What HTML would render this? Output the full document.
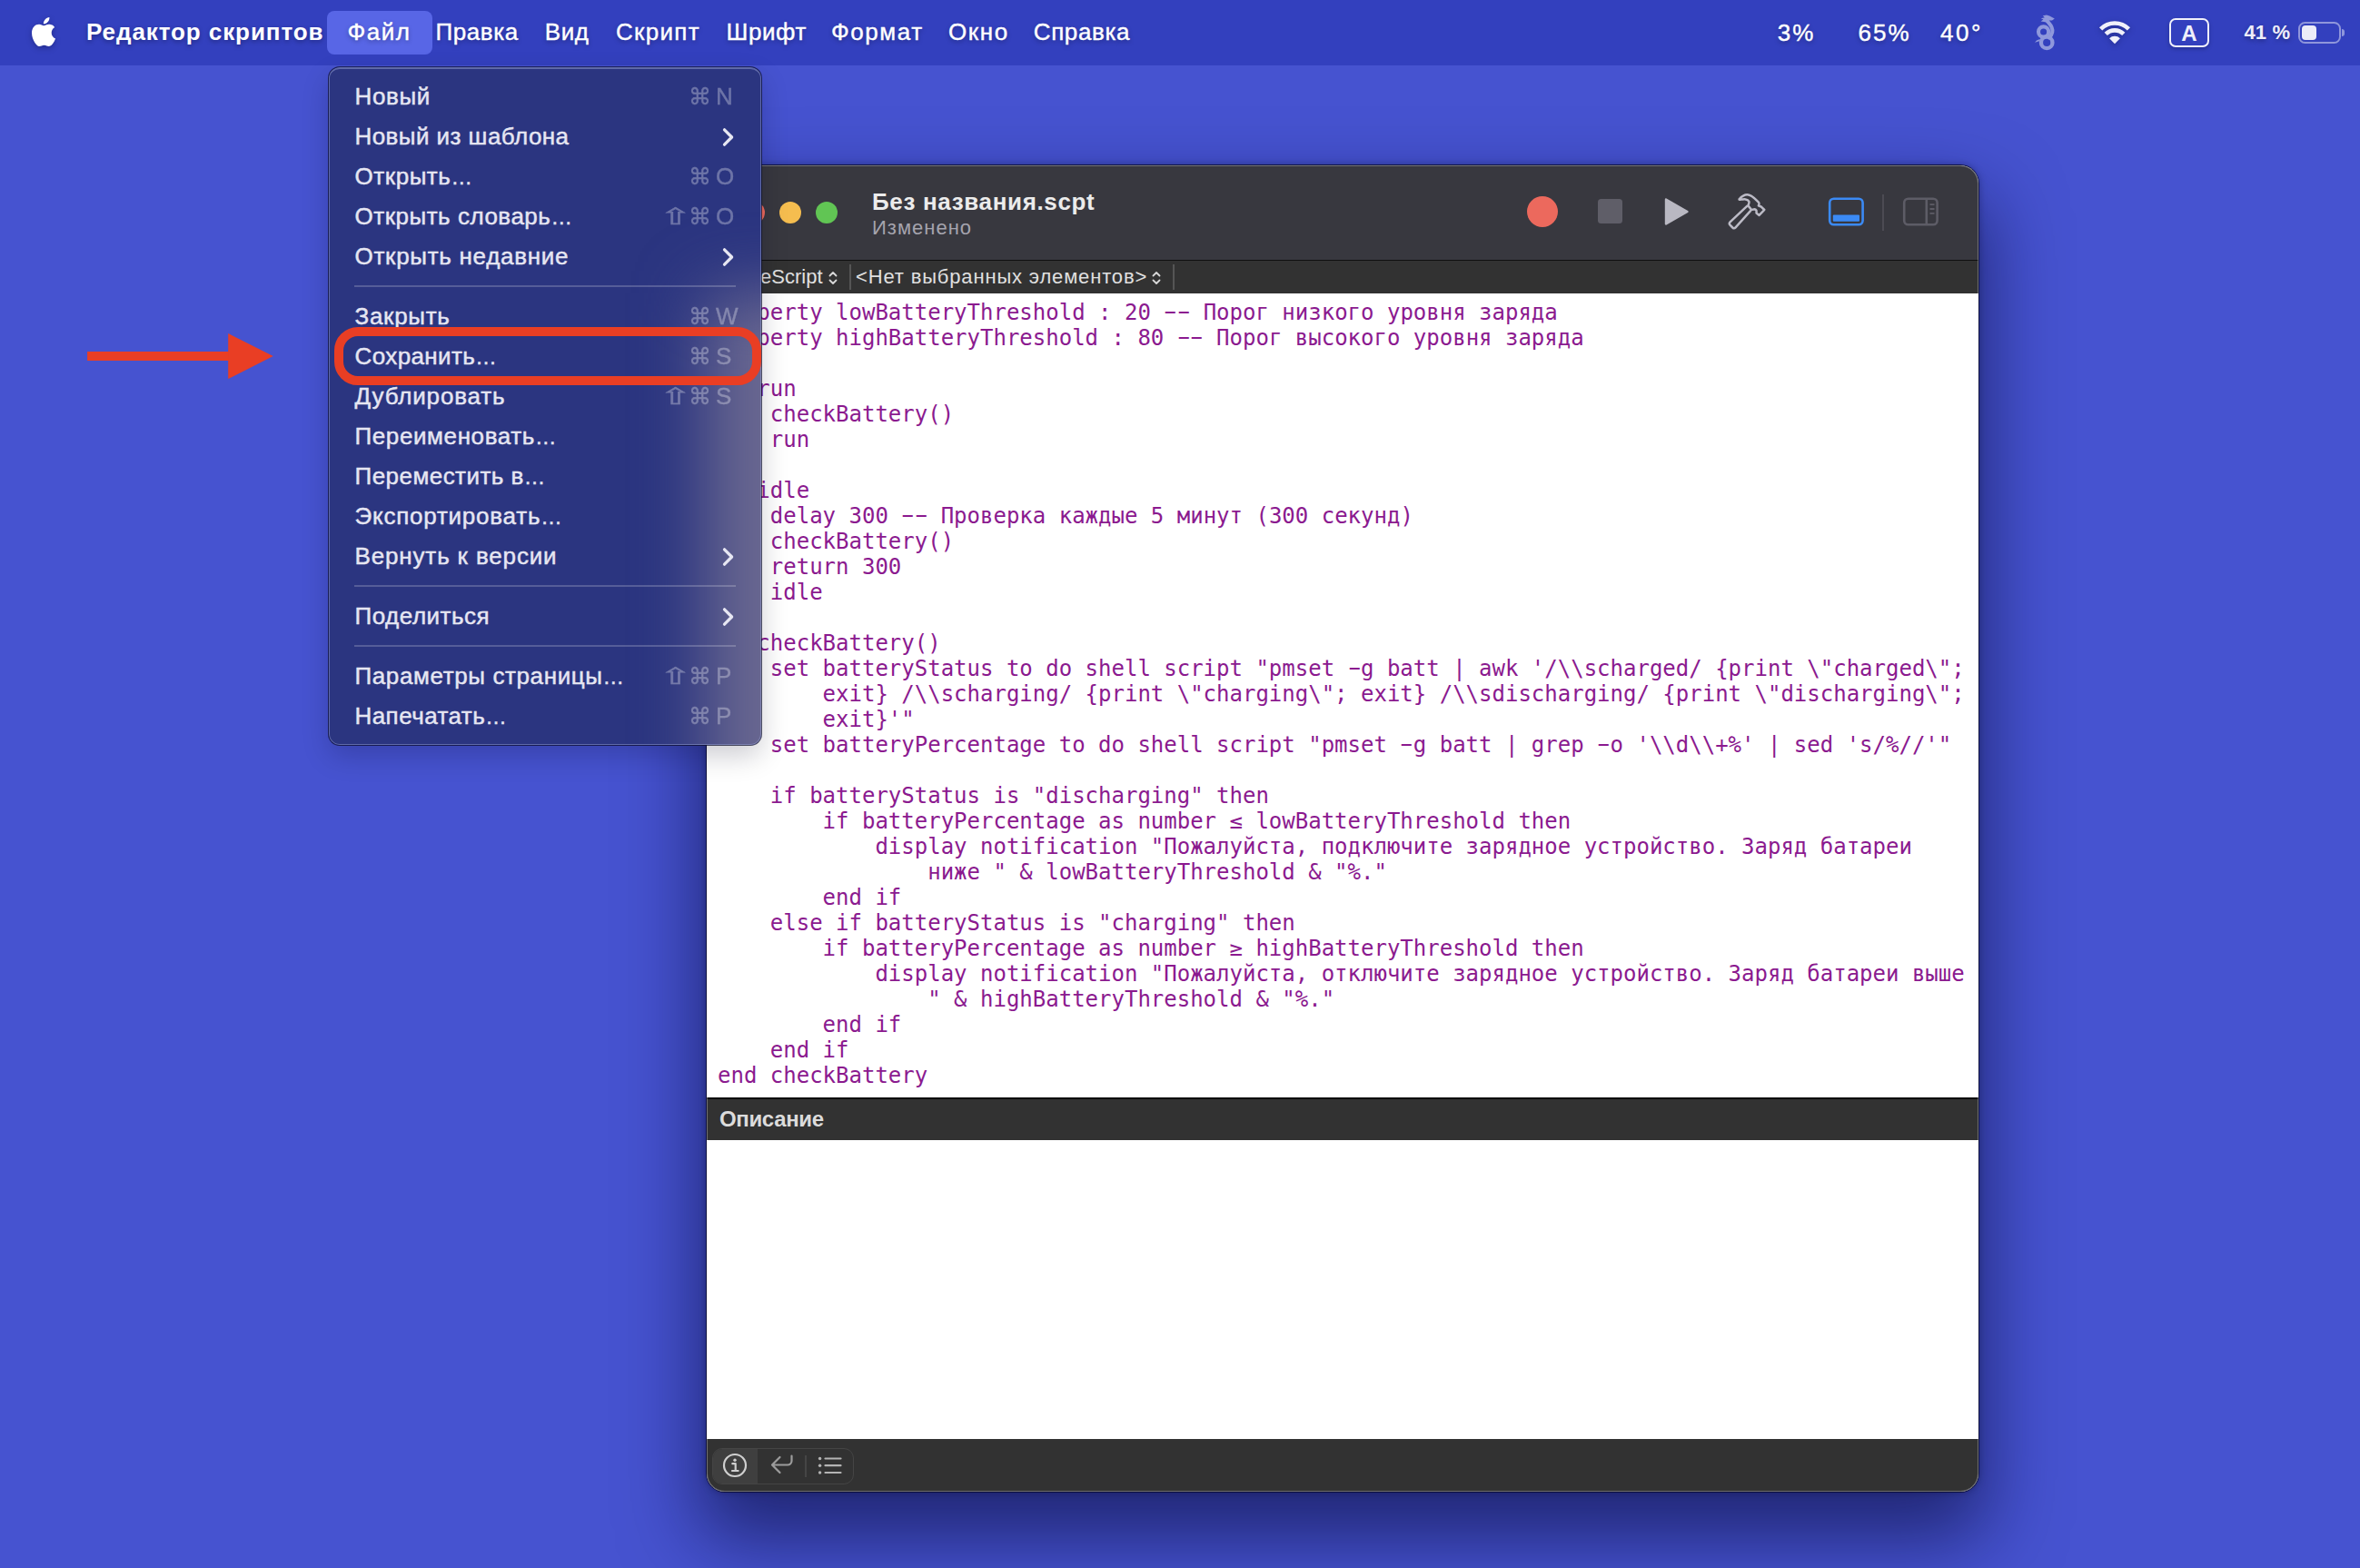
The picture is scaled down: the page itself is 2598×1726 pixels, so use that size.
<!DOCTYPE html>
<html lang="ru">
<head>
<meta charset="utf-8">
<title>Редактор скриптов</title>
<style>
*{box-sizing:border-box;margin:0;padding:0}
html,body{width:2598px;height:1726px;overflow:hidden}
body{position:relative;background:#4653d0;font-family:"Liberation Sans","DejaVu Sans",sans-serif;color:#fff;-webkit-font-smoothing:antialiased}
.abs{position:absolute}
/* ---------- menu bar ---------- */
#menubar{position:absolute;left:0;top:0;width:2598px;height:72px;background:#3340be}
#menubar .mi{-webkit-text-stroke:.4px #fff;position:absolute;top:0;height:72px;line-height:72px;font-size:26px;white-space:nowrap;color:#fff;text-shadow:0 2px 5px rgba(0,0,30,.35)}
#menubar .mi span{position:relative;top:-1px}
#menubar .b{font-weight:bold;-webkit-text-stroke:0}
#filehl{position:absolute;left:360px;top:12px;width:116px;height:48px;border-radius:8px;background:#5866e6}
.st{-webkit-text-stroke:.4px #fff;position:absolute;top:0;height:72px;line-height:72px;font-size:26px;white-space:nowrap;color:#fff;text-shadow:0 2px 5px rgba(0,0,30,.35)}
/* ---------- window ---------- */
#winshadow{position:absolute;left:778px;top:182px;width:1400px;height:1460px;border-radius:20px;box-shadow:0 44px 84px 8px rgba(8,10,56,.6),0 0 0 1px rgba(0,0,10,.65),0 0 8px rgba(0,0,40,.4)}
#window{position:absolute;left:778px;top:182px;width:1400px;height:1460px;border-radius:20px;overflow:hidden;background:#fff}
#titlebar{position:absolute;left:0;top:0;width:1400px;height:104px;background:#38383f}
#tbline{position:absolute;left:0;top:104px;width:1400px;height:2px;background:#101010}
#navbar{position:absolute;left:0;top:105px;width:1400px;height:36px;background:#323232}
#code{position:absolute;left:0;top:141px;width:1400px;height:885px;background:#fff;color:#8b1a8f;font-family:"DejaVu Sans Mono","Liberation Mono",monospace;font-size:24px;line-height:28px;padding:7px 0 0 12px;white-space:pre}
#deschead{position:absolute;left:0;top:1026px;width:1400px;height:47px;background:#323232;border-top:2px solid #0c0c0c}
#descbody{position:absolute;left:0;top:1073px;width:1400px;height:329px;background:#fff}
#botbar{position:absolute;left:0;top:1402px;width:1400px;height:58px;background:#323232}
/* ---------- dropdown menu ---------- */
#menu{position:absolute;left:362px;top:74px;width:476px;height:746px;border-radius:12px;background:#2b3580;box-shadow:0 0 0 1px rgba(10,12,40,.7),0 12px 30px rgba(0,0,30,.2);overflow:hidden}
#menu:after{content:"";position:absolute;left:0;top:0;right:0;bottom:0;border-radius:12px;border:1.5px solid rgba(160,170,220,.45);border-top-width:2px}
#menu .it{-webkit-text-stroke:.45px #e6e6f2;position:absolute;left:28.500px;height:44px;line-height:44px;font-size:26px;color:#e6e6f2;white-space:nowrap}
#menu .sc{-webkit-text-stroke:.3px #fff;opacity:.31;position:absolute;right:31px;height:44px;line-height:44px;font-size:26px;color:#fff;white-space:nowrap;text-align:right}
#menu .sep{position:absolute;left:28px;width:420px;height:2px;background:rgba(255,255,255,.2)}
#menu .chev{position:absolute;left:433px}
#menu .sc i{font-style:normal;font-family:"DejaVu Sans",sans-serif;display:inline-block}
#menu .sc i.cm{font-size:25px;width:30px;text-align:left}
#menu .sc i.sf{font-size:25px;width:29px;text-align:center;transform:scaleX(1.750)}
#menu .sc b{font-weight:normal;display:inline-block;width:19px;text-align:left}
.dot{position:absolute;top:40px;width:24px;height:24px;border-radius:50%}
#wtitle{left:182px;top:21.500px;font-size:26px;font-weight:bold;line-height:36px;color:#ececec;white-space:nowrap;letter-spacing:.65px}
#wsub{left:182px;top:53px;font-size:22px;line-height:32px;color:#a5a4ae;white-space:nowrap;letter-spacing:1px}
.nv{top:0;height:36px;line-height:36px;font-size:22px;color:#e0e0e0;white-space:nowrap}
#menu .el{font-size:23.500px;letter-spacing:0}
.hy{display:inline-block;transform:translateY(-.8px) scaleX(1.800)}
</style>
</head>
<body>

<!-- ================= MENU BAR ================= -->
<div id="menubar">
  <svg class="abs" style="left:35px;top:19px;filter:drop-shadow(0 2px 3px rgba(0,0,30,.3))" width="26" height="32" viewBox="0 0 814 1000" preserveAspectRatio="none"><path fill="#fff" d="M788.1 340.9c-5.8 4.5-108.2 62.2-108.2 190.5 0 148.4 130.3 200.9 134.2 202.2-.6 3.2-20.7 71.9-68.7 141.9-42.8 61.6-87.5 123.1-155.500 123.1s-85.500-39.500-164-39.500c-76.500 0-103.700 40.800-165.900 40.800s-105.600-57-155.500-127C46.700 790.700 0 663 0 541.800c0-194.400 126.400-297.500 250.800-297.500 66.100 0 121.200 43.400 162.700 43.400 39.500 0 101.100-46 176.300-46 28.500 0 130.900 2.600 198.300 99.200zm-234-181.500c31.100-36.900 53.100-88.100 53.100-139.300 0-7.100-.6-14.300-1.900-20.100-50.600 1.900-110.800 33.700-147.100 75.800-28.500 32.400-55.100 83.600-55.100 135.500 0 7.800 1.300 15.600 1.900 18.100 3.200.6 8.400 1.300 13.600 1.300 45.400 0 102.500-30.400 135.500-71.300z"/></svg>
  <div id="filehl"></div>
  <div class="mi b" style="left:95px;letter-spacing:0.92px"><span>Редактор скриптов</span></div>
  <div class="mi" style="left:382.5px;letter-spacing:1.5px"><span>Файл</span></div>
  <div class="mi" style="left:479.4px;letter-spacing:0.6px"><span>Правка</span></div>
  <div class="mi" style="left:599.7px;letter-spacing:0.6px"><span>Вид</span></div>
  <div class="mi" style="left:678px;letter-spacing:1.3px"><span>Скрипт</span></div>
  <div class="mi" style="left:799.5px;letter-spacing:0.6px"><span>Шрифт</span></div>
  <div class="mi" style="left:915px;letter-spacing:1.54px"><span>Формат</span></div>
  <div class="mi" style="left:1044px;letter-spacing:1.6px"><span>Окно</span></div>
  <div class="mi" style="left:1137.8px;letter-spacing:0.6px"><span>Справка</span></div>

  <div class="st" style="left:1956.700px;letter-spacing:2px">3%</div>
  <div class="st" style="left:2045.600px;letter-spacing:2px">65%</div>
  <div class="st" style="left:2136px;letter-spacing:2.500px">40°</div>
  <div class="st" style="left:2470.500px;font-size:22px;font-weight:bold;letter-spacing:.1px;-webkit-text-stroke:0;color:#eeeefa">41 %</div>

  <!-- dragon -->
  <svg class="abs" style="left:2225px;top:8px" width="55" height="56" viewBox="0 0 55 56"><g fill="none" stroke="#8f98dc"><circle cx="28.200" cy="38.900" r="6.250" stroke-width="4.300"/><circle cx="24.600" cy="27" r="5.600" stroke-width="4.100"/><path d="M30.800 33.500C33.800 30.500 35.300 26 33.600 22C32.400 19 30 17 28.200 14.500" stroke-width="4" stroke-linecap="round"/></g><path fill="#8f98dc" d="M21.800 12.200L25.800 11.200L23.800 9.200L28 8.400L31.200 9.600L36.800 12.500L34 14.600L30.800 14.600L30 17L25 16L21.600 15.600L24.400 13.600ZM15 38.800L17 36.400L20.600 35L20.200 37.200Z"/></svg>
  <!-- wifi -->
  <svg class="abs" style="left:2308px;top:20px;filter:drop-shadow(0 2px 3px rgba(0,0,30,.3))" width="40" height="32" viewBox="0 0 40 32"><g fill="none" stroke="#f0f0fa" stroke-width="4.600"><path d="M4.600 11.800a21.800 21.800 0 0 1 30.800 0"/><path d="M10.200 17.400a13.900 13.900 0 0 1 19.600 0"/></g><path fill="#f0f0fa" d="M20 28.200l-5.900-5.900a8.300 8.300 0 0 1 11.800 0z"/></svg>
  <!-- input source -->
  <div class="abs" style="left:2388px;top:20px;width:44px;height:32px;border:2.500px solid #f0f0fa;border-radius:7px;box-shadow:0 2px 4px rgba(0,0,30,.25)"></div>
  <div class="abs" style="left:2388px;top:20px;width:44px;height:32px;line-height:33px;text-align:center;font-size:24px;font-weight:bold;color:#f0f0fa">A</div>
  <!-- battery -->
  <div class="abs" style="left:2530px;top:24px;width:46.500px;height:24px;border:2px solid rgba(255,255,255,.45);border-radius:7.500px"></div>
  <div class="abs" style="left:2534px;top:28px;width:16px;height:16px;border-radius:4px;background:#ececf8"></div>
  <div class="abs" style="left:2578px;top:32px;width:3px;height:8px;border-radius:0 3px 3px 0;background:rgba(255,255,255,.45)"></div>
</div>

<!-- ================= WINDOW ================= -->
<div id="winshadow"></div>
<div id="window">
  <div id="titlebar">
    <div class="dot" style="left:40px;background:#ec6a5e"></div>
    <div class="dot" style="left:80px;background:#f5bd4f"></div>
    <div class="dot" style="left:120px;background:#61c554"></div>
    <div class="abs" id="wtitle">Без названия.scpt</div>
    <div class="abs" id="wsub">Изменено</div>
    <!-- record -->
    <div class="abs" style="left:903px;top:34px;width:34px;height:34px;border-radius:50%;background:#ec695d"></div>
    <!-- stop -->
    <div class="abs" style="left:981px;top:37px;width:27px;height:27px;border-radius:3.500px;background:#5f5e68"></div>
    <!-- play -->
    <svg class="abs" style="left:1053px;top:34px" width="30" height="34" viewBox="0 0 30 34"><path d="M3 3.500L26.500 17 3 30.500z" fill="#b9b8c2" stroke="#b9b8c2" stroke-width="2.400" stroke-linejoin="round"/></svg>
    <!-- hammer -->
    <svg class="abs" style="left:1120px;top:28px" width="50" height="46" viewBox="0 0 50 46"><g fill="none" stroke="#bcbbc6" stroke-width="2.500" stroke-linejoin="round" stroke-linecap="round"><path d="M25.200 16.900L6.600 34.400Q4.900 36 6.500 37.700L9.300 40.500Q11 42.100 12.600 40.400L29 22.200"/><path d="M16.600 9.400C19 6.500 22 4.300 25.500 4.300C30.500 4.300 34 9 38.300 13.200C39 14 38.200 15.600 37.900 16.400C39 17 40.200 17 41.100 17.800L44.300 21L38.600 26.900L35.800 24.800C35 24 36 22.500 35.500 21.700C35 20.800 34.100 20.300 33.300 20.300C32.300 20.400 31 21 30.200 21L26.400 16.400C26.800 15 28 13 27.400 11.800C26.600 10.300 25 9.600 23.600 9.400C22 9.100 20.300 9.600 18.700 9.600C17.500 9.700 16.400 10 16.600 9.400Z"/></g></svg>
    <!-- bottom panel (active) -->
    <svg class="abs" style="left:1233px;top:33px" width="43" height="36" viewBox="0 0 43 36"><rect x="3.200" y="3.700" width="36.400" height="28.600" rx="4.500" fill="none" stroke="#3b8af5" stroke-width="2.600"/><rect x="6.800" y="21.500" width="29.200" height="7.200" rx="1" fill="#3b8af5"/></svg>
    <div class="abs" style="left:1294px;top:32px;width:2px;height:40px;background:#4c4b53"></div>
    <!-- right panel -->
    <svg class="abs" style="left:1315px;top:33px" width="43" height="36" viewBox="0 0 43 36"><g fill="none" stroke="#5d5c66"><rect x="3.200" y="3.700" width="36.400" height="28.600" rx="4.500" stroke-width="2.600"/><path d="M27.800 4v28" stroke-width="2.600"/><path d="M31.500 10.200h5M31.500 15h5M31.500 19.800h5" stroke-width="1.800"/></g></svg>
  </div>
  <div id="tbline"></div>
  <div id="navbar">
    <div class="abs nv" style="left:15px">AppleScript</div>
    <svg class="abs" style="left:133px;top:9px" width="12" height="20" viewBox="0 0 12 20"><path d="M2.500 7.500L6 4l3.500 3.500M2.500 12.500L6 16l3.500-3.500" fill="none" stroke="#d8d8d8" stroke-width="1.800" stroke-linecap="round" stroke-linejoin="round"/></svg>
    <div class="abs" style="left:157px;top:4px;width:2px;height:28px;background:#555"></div>
    <div class="abs nv" style="left:164px;letter-spacing:.84px">&lt;Нет выбранных элементов&gt;</div>
    <svg class="abs" style="left:489px;top:9px" width="12" height="20" viewBox="0 0 12 20"><path d="M2.500 7.500L6 4l3.500 3.500M2.500 12.500L6 16l3.500-3.500" fill="none" stroke="#d8d8d8" stroke-width="1.800" stroke-linecap="round" stroke-linejoin="round"/></svg>
    <div class="abs" style="left:513px;top:4px;width:2px;height:28px;background:#555"></div>
  </div>
  <div id="code">property lowBatteryThreshold : 20 <span class="hy">-</span><span class="hy">-</span> Порог низкого уровня заряда
property highBatteryThreshold : 80 <span class="hy">-</span><span class="hy">-</span> Порог высокого уровня заряда

on run
    checkBattery()
end run

on idle
    delay 300 <span class="hy">-</span><span class="hy">-</span> Проверка каждые 5 минут (300 секунд)
    checkBattery()
    return 300
end idle

on checkBattery()
    set batteryStatus to do shell script "pmset <span class="hy">-</span>g batt | awk '/\\scharged/ {print \"charged\";
        exit} /\\scharging/ {print \"charging\"; exit} /\\sdischarging/ {print \"discharging\";
        exit}'"
    set batteryPercentage to do shell script "pmset <span class="hy">-</span>g batt | grep <span class="hy">-</span>o '\\d\\+%' | sed 's/%//'"

    if batteryStatus is "discharging" then
        if batteryPercentage as number ≤ lowBatteryThreshold then
            display notification "Пожалуйста, подключите зарядное устройство. Заряд батареи
                ниже " &amp; lowBatteryThreshold &amp; "%."
        end if
    else if batteryStatus is "charging" then
        if batteryPercentage as number ≥ highBatteryThreshold then
            display notification "Пожалуйста, отключите зарядное устройство. Заряд батареи выше
                " &amp; highBatteryThreshold &amp; "%."
        end if
    end if
end checkBattery</div>
  <div id="deschead"><div class="abs" style="left:14px;top:-1px;height:46px;line-height:46px;font-size:24px;font-weight:bold;color:#dcdcdc;letter-spacing:-.35px">Описание</div></div>
  <div id="descbody"></div>
  <div id="botbar">
    <div class="abs" style="left:6px;top:10px;width:156px;height:40px;border:1.500px solid #454545;border-radius:11px;overflow:hidden"><div class="abs" style="left:-2px;top:-2px;width:51px;height:42px;background:#3f3f3f"></div><div class="abs" style="left:101px;top:7px;width:2px;height:24px;background:#454545"></div></div>
    <svg class="abs" style="left:16px;top:14px" width="30" height="30" viewBox="0 0 30 30"><circle cx="15" cy="15" r="12" fill="none" stroke="#cfcfcf" stroke-width="2.200"/><circle cx="15" cy="9.300" r="1.700" fill="#cfcfcf"/><path d="M12.300 13.200h3.400v7.600M12 21h6.600" fill="none" stroke="#cfcfcf" stroke-width="2.200" stroke-linecap="round" stroke-linejoin="round"/></svg>
    <svg class="abs" style="left:68px;top:15.300px" width="30" height="26" viewBox="0 0 30 26"><path d="M25.500 3.500v5.500a4.500 4.500 0 0 1-4.500 4.500H4.500M12.500 5L4 13.500 12.500 22" fill="none" stroke="#9c9c9c" stroke-width="2.200" stroke-linecap="round" stroke-linejoin="round"/></svg>
    <svg class="abs" style="left:121px;top:15.500px" width="30" height="26" viewBox="0 0 30 26"><g stroke="#b4b4b4" stroke-width="2.200" stroke-linecap="round"><path d="M9.500 5.500h17M9.500 13.200h17M9.500 21h17"/></g><g fill="#b4b4b4"><circle cx="3.600" cy="5.500" r="1.700"/><circle cx="3.600" cy="13.200" r="1.700"/><circle cx="3.600" cy="21" r="1.700"/></g></svg>
  </div>
  <div class="abs" style="left:0;top:0;width:1400px;height:1460px;border-radius:20px;border:1px solid rgba(255,255,255,.3);pointer-events:none"></div>
</div>

<!-- ================= DROPDOWN MENU ================= -->
<div id="menu">
  <div class="abs" style="left:416px;top:249px;width:260px;height:700px;background:#6a6890;filter:blur(38px)"></div>
  <div class="it" style="top:10px;letter-spacing:0.61px">Новый</div>
  <div class="sc" style="top:10px"><i class="cm">⌘</i><b>N</b></div>
  <div class="it" style="top:54px;letter-spacing:0.44px">Новый из шаблона</div>
  <svg class="chev" style="top:65.7px" width="14" height="22" viewBox="0 0 14 22"><path d="M2.500 2.800L10.600 11L2.500 19.200" fill="none" stroke="#e6e6f2" stroke-width="3.300" stroke-linecap="round" stroke-linejoin="round"/></svg>
  <div class="it" style="top:98px;letter-spacing:0.54px">Открыть<span class="el">…</span></div>
  <div class="sc" style="top:98px"><i class="cm">⌘</i><b>O</b></div>
  <div class="it" style="top:142px;letter-spacing:0.51px">Открыть словарь<span class="el">…</span></div>
  <div class="sc" style="top:142px"><i class="sf">⇧</i><i class="cm">⌘</i><b>O</b></div>
  <div class="it" style="top:186px;letter-spacing:0.71px">Открыть недавние</div>
  <svg class="chev" style="top:197.7px" width="14" height="22" viewBox="0 0 14 22"><path d="M2.500 2.800L10.600 11L2.500 19.200" fill="none" stroke="#e6e6f2" stroke-width="3.300" stroke-linecap="round" stroke-linejoin="round"/></svg>
  <div class="sep" style="top:240px"></div>
  <div class="it" style="top:252px;letter-spacing:0.7px">Закрыть</div>
  <div class="sc" style="top:252px"><i class="cm">⌘</i><b>W</b></div>
  <div class="it" style="top:296px;letter-spacing:0.4px">Сохранить<span class="el">…</span></div>
  <div class="sc" style="top:296px"><i class="cm">⌘</i><b>S</b></div>
  <div class="it" style="top:340px;letter-spacing:0.84px">Дублировать</div>
  <div class="sc" style="top:340px"><i class="sf">⇧</i><i class="cm">⌘</i><b>S</b></div>
  <div class="it" style="top:384px;letter-spacing:0.6px">Переименовать<span class="el">…</span></div>
  <div class="it" style="top:428px;letter-spacing:0.46px">Переместить в<span class="el">…</span></div>
  <div class="it" style="top:472px;letter-spacing:0.77px">Экспортировать<span class="el">…</span></div>
  <div class="it" style="top:516px;letter-spacing:0.85px">Вернуть к версии</div>
  <svg class="chev" style="top:527.7px" width="14" height="22" viewBox="0 0 14 22"><path d="M2.500 2.800L10.600 11L2.500 19.200" fill="none" stroke="#e6e6f2" stroke-width="3.300" stroke-linecap="round" stroke-linejoin="round"/></svg>
  <div class="sep" style="top:570px"></div>
  <div class="it" style="top:582px;letter-spacing:0.51px">Поделиться</div>
  <svg class="chev" style="top:593.7px" width="14" height="22" viewBox="0 0 14 22"><path d="M2.500 2.800L10.600 11L2.500 19.200" fill="none" stroke="#e6e6f2" stroke-width="3.300" stroke-linecap="round" stroke-linejoin="round"/></svg>
  <div class="sep" style="top:636px"></div>
  <div class="it" style="top:648px;letter-spacing:0.61px">Параметры страницы<span class="el">…</span></div>
  <div class="sc" style="top:648px"><i class="sf">⇧</i><i class="cm">⌘</i><b>P</b></div>
  <div class="it" style="top:692px;letter-spacing:0.44px">Напечатать<span class="el">…</span></div>
  <div class="sc" style="top:692px"><i class="cm">⌘</i><b>P</b></div>
</div>

<!-- ================= ANNOTATIONS ================= -->
<svg class="abs" style="left:90px;top:360px" width="220" height="66" viewBox="0 0 220 66"><path d="M6.100 32H165" stroke="#e93e24" stroke-width="9.800"/><path d="M161.200 7.100L210.700 32L161.200 57.100z" fill="#e93e24"/></svg>
<div class="abs" style="left:368px;top:360px;width:470px;height:63.500px;border:10px solid #e93e24;border-radius:26px"></div>

</body>
</html>
